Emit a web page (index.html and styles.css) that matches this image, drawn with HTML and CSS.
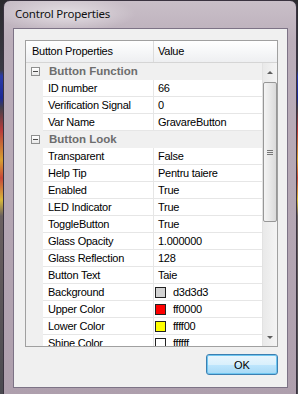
FILE: index.html
```html
<!DOCTYPE html>
<html lang="en">
<head>
    <meta charset="UTF-8">
    <meta name="viewport" content="width=device-width, initial-scale=1.0">
    <title>Control Properties</title>
    <link rel="stylesheet" href="styles.css">
</head>
<body>
    <div class="window">
        <div class="titlebar">Control Properties</div>

        <div class="client">
            <!-- Property grid -->
            <div class="grid">
                <div class="grid-head">
                    <div class="head-name">Button Properties</div>
                    <div class="head-value">Value</div>
                </div>

                <div class="grid-body">
                    <div class="rows">
                        <div class="group"><span class="toggle"></span>Button Function</div>
                        <div class="row"><div class="name">ID number</div><div class="value">66</div></div>
                        <div class="row"><div class="name">Verification Signal</div><div class="value">0</div></div>
                        <div class="row"><div class="name">Var Name</div><div class="value">GravareButton</div></div>

                        <div class="group"><span class="toggle"></span>Button Look</div>
                        <div class="row"><div class="name">Transparent</div><div class="value">False</div></div>
                        <div class="row"><div class="name">Help Tip</div><div class="value">Pentru taiere</div></div>
                        <div class="row"><div class="name">Enabled</div><div class="value">True</div></div>
                        <div class="row"><div class="name">LED Indicator</div><div class="value">True</div></div>
                        <div class="row"><div class="name">ToggleButton</div><div class="value">True</div></div>
                        <div class="row"><div class="name">Glass Opacity</div><div class="value">1.000000</div></div>
                        <div class="row"><div class="name">Glass Reflection</div><div class="value">128</div></div>
                        <div class="row"><div class="name">Button Text</div><div class="value">Taie</div></div>
                        <div class="row"><div class="name">Background</div><div class="value"><span class="swatch" style="background:#d3d3d3"></span>d3d3d3</div></div>
                        <div class="row"><div class="name">Upper Color</div><div class="value"><span class="swatch" style="background:#ff0000"></span>ff0000</div></div>
                        <div class="row"><div class="name">Lower Color</div><div class="value"><span class="swatch" style="background:#ffff00"></span>ffff00</div></div>
                        <div class="row"><div class="name">Shine Color</div><div class="value"><span class="swatch" style="background:#ffffff"></span>ffffff</div></div>
                    </div>

                    <div class="scrollbar">
                        <div class="arrow up"></div>
                        <div class="thumb"><span class="grip"></span></div>
                        <div class="arrow down"></div>
                    </div>
                </div>
            </div>

            <div class="buttons">
                <button class="ok">OK</button>
            </div>
        </div>
    </div>
</body>
</html>
```

FILE: styles.css
```css
* {
    box-sizing: border-box;
}

body {
    margin: 0;
    width: 298px;
    height: 394px;
    overflow: hidden;
    font-family: "Liberation Sans", Arial, sans-serif;
    font-size: 11px;
    letter-spacing: -0.25px;
    /* blurred desktop showing at the left edge */
    background: linear-gradient(to bottom, #2b2a2e 0, #3a3a44 70px, #2a3aa8 76px, #1c2a96 98px, #44404a 108px,
        #b83a3a 130px, #d8a030 160px, #c8483a 178px, #d8b838 200px, #6a6060 216px, #4a4a50 394px);
}

.window {
    margin-left: 3px;
    width: 294px;
    height: 400px;
    border: 1px solid #3a3340;
    border-radius: 7px 7px 0 0;
    background:
        radial-gradient(ellipse 70px 18px at 62px 13px, rgba(255, 255, 255, 0.55), rgba(255, 255, 255, 0)),
        linear-gradient(to bottom, #c9bfc8 0, #bbaeba 40px, #ae9fad 394px);
    display: flex;
    flex-direction: column;
}

.titlebar {
    height: 27px;
    line-height: 26px;
    padding-left: 11px;
    font-family: "Noto Sans", "Liberation Sans", sans-serif;
    font-size: 11.5px;
    letter-spacing: -0.2px;
    color: #111;
}

.client {
    margin: 0 8px 0 9px;
    height: 360px;
    border: 1px solid #7d7386;
    background-color: #f0f0f0;
    padding: 11px 9px 0 11px;
}

/* property grid */
.grid {
    width: 253px;
    height: 307px;
    border: 1px solid #a0a0a0;
    background-color: #fff;
    display: flex;
    flex-direction: column;
    overflow: hidden;
}

.grid-head {
    height: 22px;
    flex-shrink: 0;
    display: flex;
    border-bottom: 1px solid #d5d5d5;
    background: linear-gradient(to bottom, #ffffff 0, #f7f8f9 45%, #eeeff1 100%);
}

.head-name {
    width: 128px;
    padding-left: 6px;
    line-height: 21px;
    border-right: 1px solid #dcdcdc;
}

.head-value {
    padding-left: 4px;
    line-height: 21px;
}

.grid-body {
    flex: 1;
    display: flex;
    overflow: hidden;
}

.rows {
    flex: 1;
    overflow: hidden;
}

.group {
    height: 17px;
    line-height: 17px;
    background-color: #f0f0f0;
    color: #6d6d6d;
    font-weight: bold;
    font-size: 11.5px;
    letter-spacing: 0;
    display: flex;
    align-items: center;
    padding-left: 5px;
}

.toggle {
    width: 9px;
    height: 9px;
    border: 1px solid #8e8f8f;
    background: linear-gradient(to bottom, #ffffff, #e8e8e8);
    margin-right: 9px;
    position: relative;
}

.toggle::after {
    content: "";
    position: absolute;
    left: 1px;
    top: 3px;
    width: 5px;
    height: 1px;
    background-color: #4a4a4a;
}

.row {
    height: 17px;
    display: flex;
    padding-left: 17px;
    background-color: #f0f0f0;
}

.name, .value {
    height: 17px;
    line-height: 17px;
    background-color: #fff;
    border-bottom: 1px solid #e6e6e6;
    white-space: nowrap;
    overflow: hidden;
}

.name {
    width: 111px;
    padding-left: 5px;
    border-right: 1px solid #e6e6e6;
}

.value {
    flex: 1;
    padding-left: 4px;
    display: flex;
    align-items: center;
}

.swatch {
    width: 11px;
    height: 11px;
    border: 1px solid #222;
    margin-left: -3px;
    margin-right: 7px;
}

/* scrollbar */
.scrollbar {
    width: 15px;
    background: linear-gradient(to right, #e9e9e9, #f4f4f4);
    border-left: 1px solid #e2e2e2;
    display: flex;
    flex-direction: column;
    align-items: center;
    padding: 8px 0 7px;
}

.arrow {
    width: 0;
    height: 0;
    border-left: 3px solid transparent;
    border-right: 3px solid transparent;
}

.arrow.up {
    border-bottom: 3px solid #5e5e5e;
}

.arrow.down {
    border-top: 3px solid #5e5e5e;
    margin-top: auto;
}

.thumb {
    width: 14px;
    height: 140px;
    margin-top: 8px;
    border: 1px solid #979797;
    border-radius: 2px;
    background: linear-gradient(to right, #f4f4f4, #e8e8e8 50%, #dadada);
    display: flex;
    align-items: center;
    justify-content: center;
}

.grip {
    width: 6px;
    height: 5px;
    border-top: 1px solid #777;
    border-bottom: 1px solid #777;
    position: relative;
}

.grip::after {
    content: "";
    position: absolute;
    left: 0;
    top: 1px;
    width: 6px;
    height: 1px;
    background-color: #777;
}

/* dialog button */
.buttons {
    display: flex;
    justify-content: flex-end;
    margin-top: 7px;
}

.ok {
    width: 72px;
    height: 21px;
    font-family: "Liberation Sans", Arial, sans-serif;
    font-size: 11px;
    color: #000;
    border: 1px solid #3c7fb1;
    border-radius: 3px;
    background: linear-gradient(to bottom, #eaf6fd 0, #d9f0fc 50%, #bee6fd 51%, #a7d9f5 100%);
    box-shadow: inset 0 0 0 1px #6fc6f0;
    padding: 0;
}
```
